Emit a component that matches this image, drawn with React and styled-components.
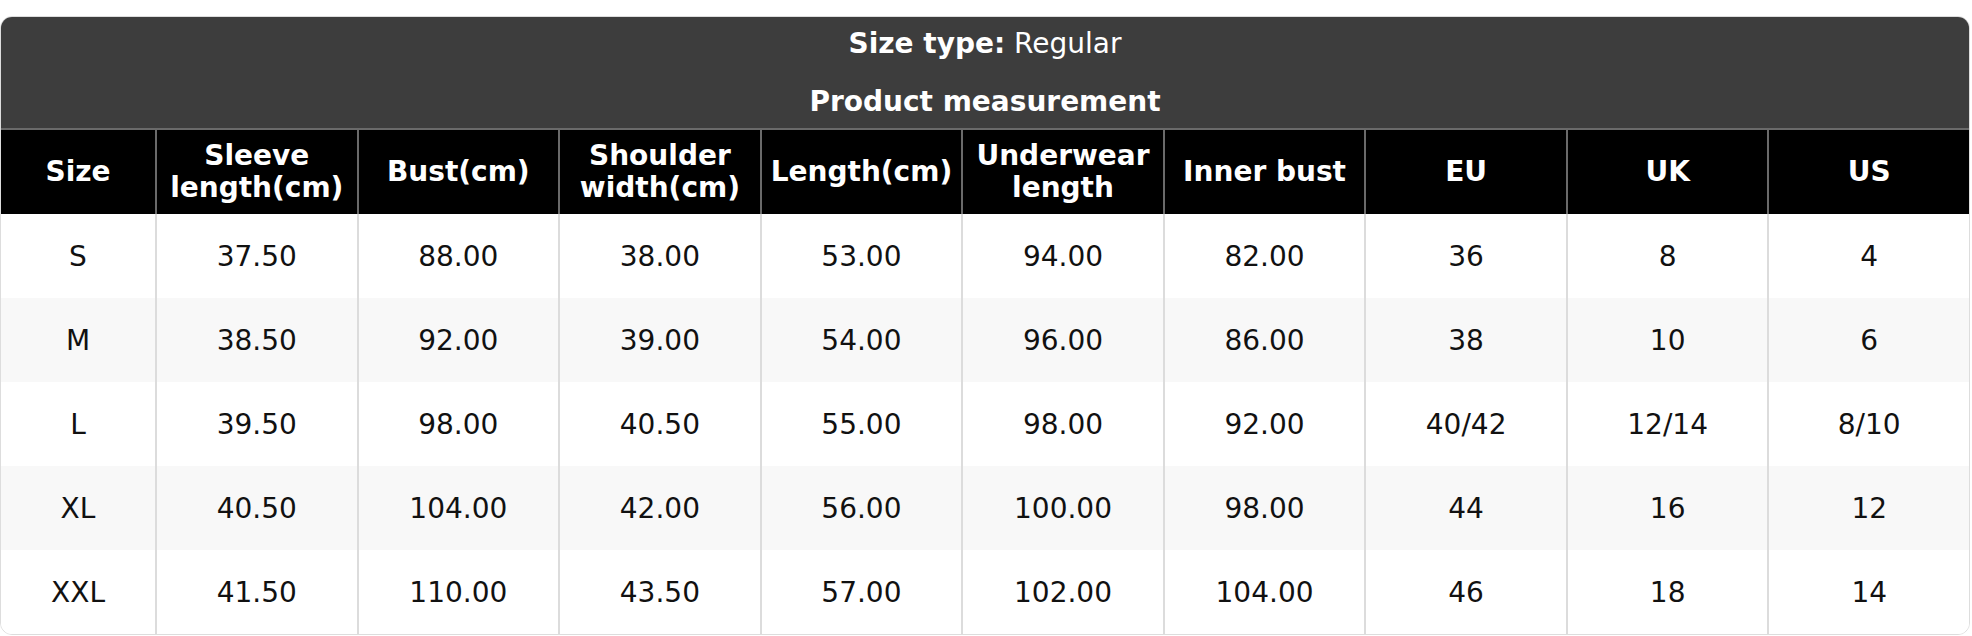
import React from "react";
import styled, { createGlobalStyle } from "styled-components";

const GlobalStyle = createGlobalStyle`
  body {
    margin: 0;
    background: #ffffff;
    font-family: "DejaVu Sans", "Liberation Sans", sans-serif;
  }
`

const Page = styled.div`
  padding-top: 16px;
  width: 1970px;
`
const Table = styled.div`
  border: 1px solid #dddddd;
  border-radius: 12px;
  overflow: hidden;
  background: #ffffff;
`
const Caption = styled.div`
  background: #3d3d3d;
  color: #ffffff;
  display: flex;
  flex-direction: column;
  align-items: center;
  gap: 24px;
  padding: 10px 0 9px;
  font-size: 28px;
  line-height: 34px;
  .label {
    font-weight: bold;
  }
`
const Title = styled.div`
  font-weight: bold;
`
const Row = styled.div`
  display: grid;
  grid-template-columns: 154px repeat(9, 1fr);
  background: ${(p) => (p.$striped ? "#f8f8f8" : "#ffffff")};
`
const HeadRow = styled(Row)`
  background: #000000;
  border-top: 2px solid #6a6a6a;
`
const HeadCell = styled.div`
  display: flex;
  align-items: center;
  justify-content: center;
  text-align: center;
  height: 84px;
  color: #ffffff;
  font-weight: bold;
  font-size: 28px;
  line-height: 32px;
  border-left: ${(p) => (p.$first ? "none" : "2px solid #6a6a6a")};
`
const Cell = styled.div`
  display: flex;
  align-items: center;
  justify-content: center;
  height: 84px;
  color: #111111;
  font-size: 28px;
  border-left: ${(p) => (p.$first ? "none" : "2px solid #dcdcdc")};
`

const columns = [
  "Size",
  ["Sleeve", "length(cm)"],
  "Bust(cm)",
  ["Shoulder", "width(cm)"],
  "Length(cm)",
  ["Underwear", "length"],
  "Inner bust",
  "EU",
  "UK",
  "US",
];

const rows = [
  ["S", "37.50", "88.00", "38.00", "53.00", "94.00", "82.00", "36", "8", "4"],
  ["M", "38.50", "92.00", "39.00", "54.00", "96.00", "86.00", "38", "10", "6"],
  ["L", "39.50", "98.00", "40.50", "55.00", "98.00", "92.00", "40/42", "12/14", "8/10"],
  ["XL", "40.50", "104.00", "42.00", "56.00", "100.00", "98.00", "44", "16", "12"],
  ["XXL", "41.50", "110.00", "43.50", "57.00", "102.00", "104.00", "46", "18", "14"],
];

const SizeTable = () => {
  return (
    <Table>
      <Caption>
        <div>
          <span className="label">Size type:</span> Regular
        </div>
        <Title>Product measurement</Title>
      </Caption>
      <HeadRow>
        {columns.map((col, i) => (
          <HeadCell key={i} $first={i === 0}>
            {Array.isArray(col) ? (
              <span>
                {col[0]}
                <br />
                {col[1]}
              </span>
            ) : (
              col
            )}
          </HeadCell>
        ))}
      </HeadRow>
      {rows.map((row, r) => (
        <Row key={r} $striped={r % 2 === 1}>
          {row.map((val, i) => (
            <Cell key={i} $first={i === 0}>
              {val}
            </Cell>
          ))}
        </Row>
      ))}
    </Table>
  );
};

const App = () => {
  return (
    <Page>
      <GlobalStyle />
      <SizeTable />
    </Page>
  );
};

export default App;
